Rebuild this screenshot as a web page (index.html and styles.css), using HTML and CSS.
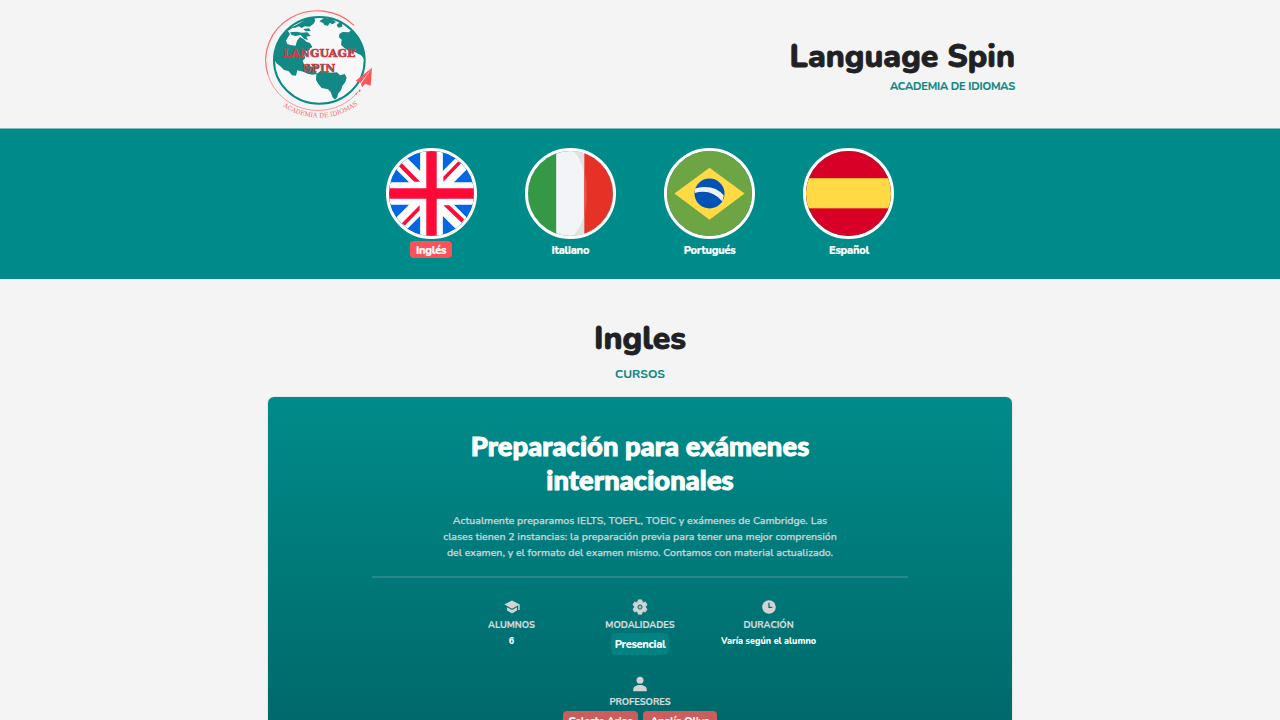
FILE: index.html
```html
<!DOCTYPE html>
<html lang="es">
<head>
<meta charset="utf-8">
<title>Language Spin</title>
<link rel="stylesheet" href="styles.css">
</head>
<body>
<header class="header">
  <div class="header-inner">
    <svg class="logo" viewBox="0 0 390 390">
      <defs>
        <clipPath id="globe"><ellipse cx="190" cy="181" rx="136" ry="129"/></clipPath>
        <path id="arc" d="M74 313A176 160 0 0 0 306 313"/>
      </defs>
      <ellipse cx="190" cy="181" rx="136" ry="130" fill="#f8f8f8" stroke="#0b8a87" stroke-width="6"/>
      <g clip-path="url(#globe)" fill="#128984">
        <path d="M96 87L117 77 133 68 157 52 174 52 178 62 172 72 161 80 146 79 137 84 128 79 119 83 109 84 96 92Z"/>
        <path d="M70 105L94 91 102 102 97 110 90 122 94 132 103 135 119 137 123 122 132 111 143 117 151 125 162 129 169 141 159 148 151 154 144 161 148 174 140 182 146 198 157 194 174 205 183 221 171 224 157 222 142 215 124 211 120 227 108 226 98 214 83 209 75 200 63 191 52 177 52 144Z"/>
        <path d="M102 97L122 95 137 98 154 97 164 107 151 110 156 120 145 117 134 105 119 108 107 105ZM142 87L159 85 164 92 149 94Z"/>
        <path d="M190 64L204 54 226 57 240 66 230 73 221 69 216 77 206 76 201 69ZM242 75L249 68 258 70 259 80 247 83Z"/>
        <path d="M250 102L260 96 278 97 285 91 299 105 316 124 326 150 328 180 315 166 298 157 281 154 265 144 255 134 257 119 249 112Z"/>
        <path d="M181 222L190 216 208 215 225 218 243 217 252 226 266 222 272 233 268 246 259 258 255 271 246 281 244 292 237 299 229 290 224 276 216 268 197 264 187 252 180 240Z"/>
        <path d="M165 193L179 197 188 206 175 205Z"/>
      </g>
      <g fill="none" stroke="#fa686b">
        <path d="M292 74A155 148 0 0 0 34 222" stroke-width="3.500" transform="translate(2 2)"/>
        <path d="M36 224A155 148 0 0 0 306 276" stroke-width="2"/>
      </g>
      <path d="M348 203L299 242 313 249ZM348 203L315 252 318 262 327 251 344 257ZM309 268L315 272 308 277ZM298 281L304 277 301 286Z" fill="#ff5558"/>
      <g class="logo-name">
        <text x="82" y="171" textLength="216" lengthAdjust="spacing">LANGUAGE</text>
        <text x="141" y="216" textLength="97" lengthAdjust="spacing">SPIN</text>
      </g>
      <text class="logo-sub"><textPath href="#arc" startOffset="9" textLength="240" lengthAdjust="spacingAndGlyphs">ACADEMIA DE IDIOMAS</textPath></text>
    </svg>
    <div class="brand">
      <h1 class="title brand-title">Language Spin</h1>
      <p class="eyebrow brand-sub">ACADEMIA DE IDIOMAS</p>
    </div>
  </div>
</header>

<nav class="languages">
  <a class="language">
    <svg class="flag" viewBox="0 0 86 86">
      <rect width="86" height="86" fill="#0566e2"/>
      <path d="M0 0L86 86M86 0L0 86" stroke="#fff" stroke-width="16"/>
      <path d="M43 0V86M0 43H86" stroke="#fff" stroke-width="23"/>
      <path d="M13 12.500L10 15.500 25.500 31H31.500ZM70 10.500L73 12.500 55 31V26ZM31 55L13 73 16 75.500 31 60ZM55 55H61L76 69 73.500 72.500Z" fill="#ff0a38"/>
      <path d="M43 0V86M0 43H86" stroke="#ff0a38" stroke-width="10.500"/>
    </svg>
    <span class="language-name active">Inglés</span>
  </a>
  <a class="language">
    <svg class="flag" viewBox="0 0 86 86">
      <rect width="86" height="86" fill="#f2f4f6"/>
      <path d="M0 0H28.500V86H0Z" fill="#359846"/>
      <path d="M46 0Q59 14 59 43T46 86H60V0Z" fill="#dfe1e3"/>
      <path d="M57 0H86V86H57Z" fill="#e63127"/>
      <path d="M57 18Q62 43 57 68Z" fill="#e8534c"/>
    </svg>
    <span class="language-name">Italiano</span>
  </a>
  <a class="language">
    <svg class="flag" viewBox="0 0 86 86">
      <rect width="86" height="86" fill="#6da544"/>
      <path d="M43 17L78.500 43 43 69.500 7.500 43Z" fill="#ffda44"/>
      <circle cx="43" cy="43" r="15.200" fill="#0052b4"/>
      <path d="M28.500 38Q47 33 57.500 45L56 51Q45 38 28 42.500Z" fill="#f0f0f0"/>
    </svg>
    <span class="language-name">Portugués</span>
  </a>
  <a class="language">
    <svg class="flag" viewBox="0 0 86 86">
      <rect width="86" height="86" fill="#d80027"/>
      <rect y="27.500" width="86" height="30.500" fill="#ffda44"/>
    </svg>
    <span class="language-name">Español</span>
  </a>
</nav>

<main class="main">
  <h2 class="title section-title">Ingles</h2>
  <p class="eyebrow section-sub">CURSOS</p>
  <article class="card">
    <h3 class="card-title">Preparación para exámenes<br>internacionales</h3>
    <p class="card-text">Actualmente preparamos IELTS, TOEFL, TOEIC y exámenes de Cambridge. Las<br>clases tienen 2 instancias: la preparación previa para tener una mejor comprensión<br>del examen, y el formato del examen mismo. Contamos con material actualizado.</p>
    <div class="facts">
      <div class="fact">
        <svg class="icon" viewBox="0 0 16 16"><path d="M8 1.500L.3 5.500 8 9.700 14.200 6.300V11H15.700V5.500ZM3 8.200V11.500L8 14.500 13 11.500V8.200L8 11Z"/></svg>
        <span class="label">ALUMNOS</span>
        <span class="value">6</span>
      </div>
      <div class="fact">
        <svg class="icon" viewBox="0 0 16 16"><path d="M6.300.8H9.700L10.200 2.700 11.500 3.400 13.400 2.900 15.100 5.800 13.800 7.200V8.800L15.100 10.200 13.400 13.100 11.500 12.600 10.200 13.300 9.700 15.200H6.300L5.800 13.300 4.500 12.600 2.600 13.100.9 10.200 2.200 8.800V7.200L.9 5.800 2.600 2.900 4.500 3.400 5.800 2.700Z" stroke="#d3d3d5" stroke-width=".7" stroke-linejoin="round"/><circle class="hub" cx="8" cy="8" r="2.100"/></svg>
        <span class="label">MODALIDADES</span>
        <span class="badge">Presencial</span>
      </div>
      <div class="fact">
        <svg class="icon" viewBox="0 0 16 16"><circle cx="8" cy="8" r="6.800"/><path class="hands" d="M8 3.700V8.300H11.300"/></svg>
        <span class="label">DURACIÓN</span>
        <span class="value">Varía según el alumno</span>
      </div>
    </div>
    <div class="teachers">
      <svg class="icon" viewBox="0 0 16 16"><circle cx="8" cy="4.300" r="3.500"/><path d="M1.200 15.200V13.500C1.200 10.500 4.500 9 8 9S14.800 10.500 14.800 13.500V15.200Z"/></svg>
      <span class="label">PROFESORES</span>
      <div class="teacher-list"><span class="teacher">Celeste Arias</span><span class="teacher">Analía Oliva</span></div>
    </div>
  </article>
</main>
</body>
</html>
```
FILE: styles.css
```css
* { box-sizing: border-box; }
body {
  margin: 0;
  height: 720px;
  overflow: hidden;
  background: #f4f4f4;
  color: #202124;
  font-family: Nunito, "Open Sans", "Noto Sans", sans-serif;
}
h1, h2, h3, p { margin: 0; }
svg { display: block; }

.header { height: 129px; border-bottom: 1px solid #80bcbc; }
.header-inner {
  width: 750px;
  height: 128px;
  margin: 0 auto;
  display: flex;
  justify-content: space-between;
}
.logo { width: 130px; height: 130px; margin-left: -9px; }
.logo-name {
  font: bold 33px "DejaVu Serif", serif;
  fill: #5a6668;
  stroke: #e9323a;
  stroke-width: 2;
}
.logo-sub { font: 19px "DejaVu Serif", serif; fill: #f0696d; }
.brand { padding-top: 36px; text-align: right; white-space: nowrap; }

.title {
  font-weight: 800;
  font-size: 32px;
  line-height: 42px;
  -webkit-text-stroke: .8px #202124;
}
.section-title { line-height: 41px; padding-bottom: 1px; }
.eyebrow { color: #0b8784; font-weight: 700; line-height: 18px; }
.brand-sub { font-size: 11px; letter-spacing: -.16px; -webkit-text-stroke: .2px #0b8784; }

.languages {
  height: 150px;
  padding-top: 19px;
  background: #008b8b;
  display: flex;
  justify-content: center;
  gap: 48.300px;
}
.language { width: 91px; display: flex; flex-direction: column; align-items: center; }
.flag { width: 91px; height: 91px; border: 3px solid #fff; border-radius: 50%; overflow: hidden; }
.language-name {
  margin-top: 2px;
  height: 17px;
  padding: 0 6px;
  border-radius: 4px;
  color: #fff;
  font-size: 11px;
  font-weight: 800;
  line-height: 19px;
  letter-spacing: -.25px;
  white-space: nowrap;
  -webkit-text-stroke: .2px #fff;
}
.active { background: #ff5258; }

.main { display: flex; flex-direction: column; align-items: center; padding-top: 39px; }
.section-sub { margin-top: 5px; font-size: 12px; -webkit-text-stroke: .1px #0b8784; }
.card {
  width: 744px;
  height: 370px;
  flex: none;
  margin-top: 14px;
  padding: 32px 104px 0;
  border-radius: 6px;
  box-shadow: 0 0 2px rgba(0, 0, 0, .18);
  background: linear-gradient(#008b8a, #006466);
  text-align: center;
}
.card-title {
  height: 67px;
  color: #fff;
  font: 900 27.300px/33.500px Lato, sans-serif;
  letter-spacing: .1px;
  -webkit-text-stroke: 1px #fff;
}
.card-text {
  box-sizing: content-box;
  height: 63px;
  padding-top: 17px;
  border-bottom: 2px solid #2b8788;
  color: #cbd1d4;
  font-size: 10.530px;
  font-weight: 600;
  line-height: 16px;
  white-space: nowrap;
  -webkit-text-stroke: .25px #cbd1d4;
}
.facts { display: grid; grid-template-columns: repeat(3, 128.500px); justify-content: center; padding-top: 21px; height: 98px; }
.fact, .teachers { display: flex; flex-direction: column; align-items: center; }
.icon { width: 16px; height: 16px; fill: #d3d3d5; }
.hands { fill: none; stroke: #007475; stroke-width: 1.300; }
.hub { fill: #9fbdbe; stroke: #007475; stroke-width: 1; }
.label { height: 18px; padding-top: 2px; color: #d8dbdd; font-size: 9.300px; font-weight: 700; line-height: 16px; -webkit-text-stroke: .2px #d8dbdd; }
.value { color: #fff; font-size: 9px; font-weight: 800; line-height: 16px; white-space: nowrap; }
.badge {
  height: 22px;
  padding: 0 4px;
  border-radius: 5px;
  background: #008382;
  color: #fff;
  font-size: 11px;
  font-weight: 800;
  line-height: 23px;
  letter-spacing: -.3px;
}
.teacher-list { display: flex; gap: 5px; margin-top: 1px; }
.teacher {
  width: 74.500px;
  height: 22px;
  border-radius: 4px;
  background: #cd5c5c;
  color: #fff;
  font-size: 11px;
  font-weight: 800;
  line-height: 22px;
  letter-spacing: -.4px;
  white-space: nowrap;
}
```
